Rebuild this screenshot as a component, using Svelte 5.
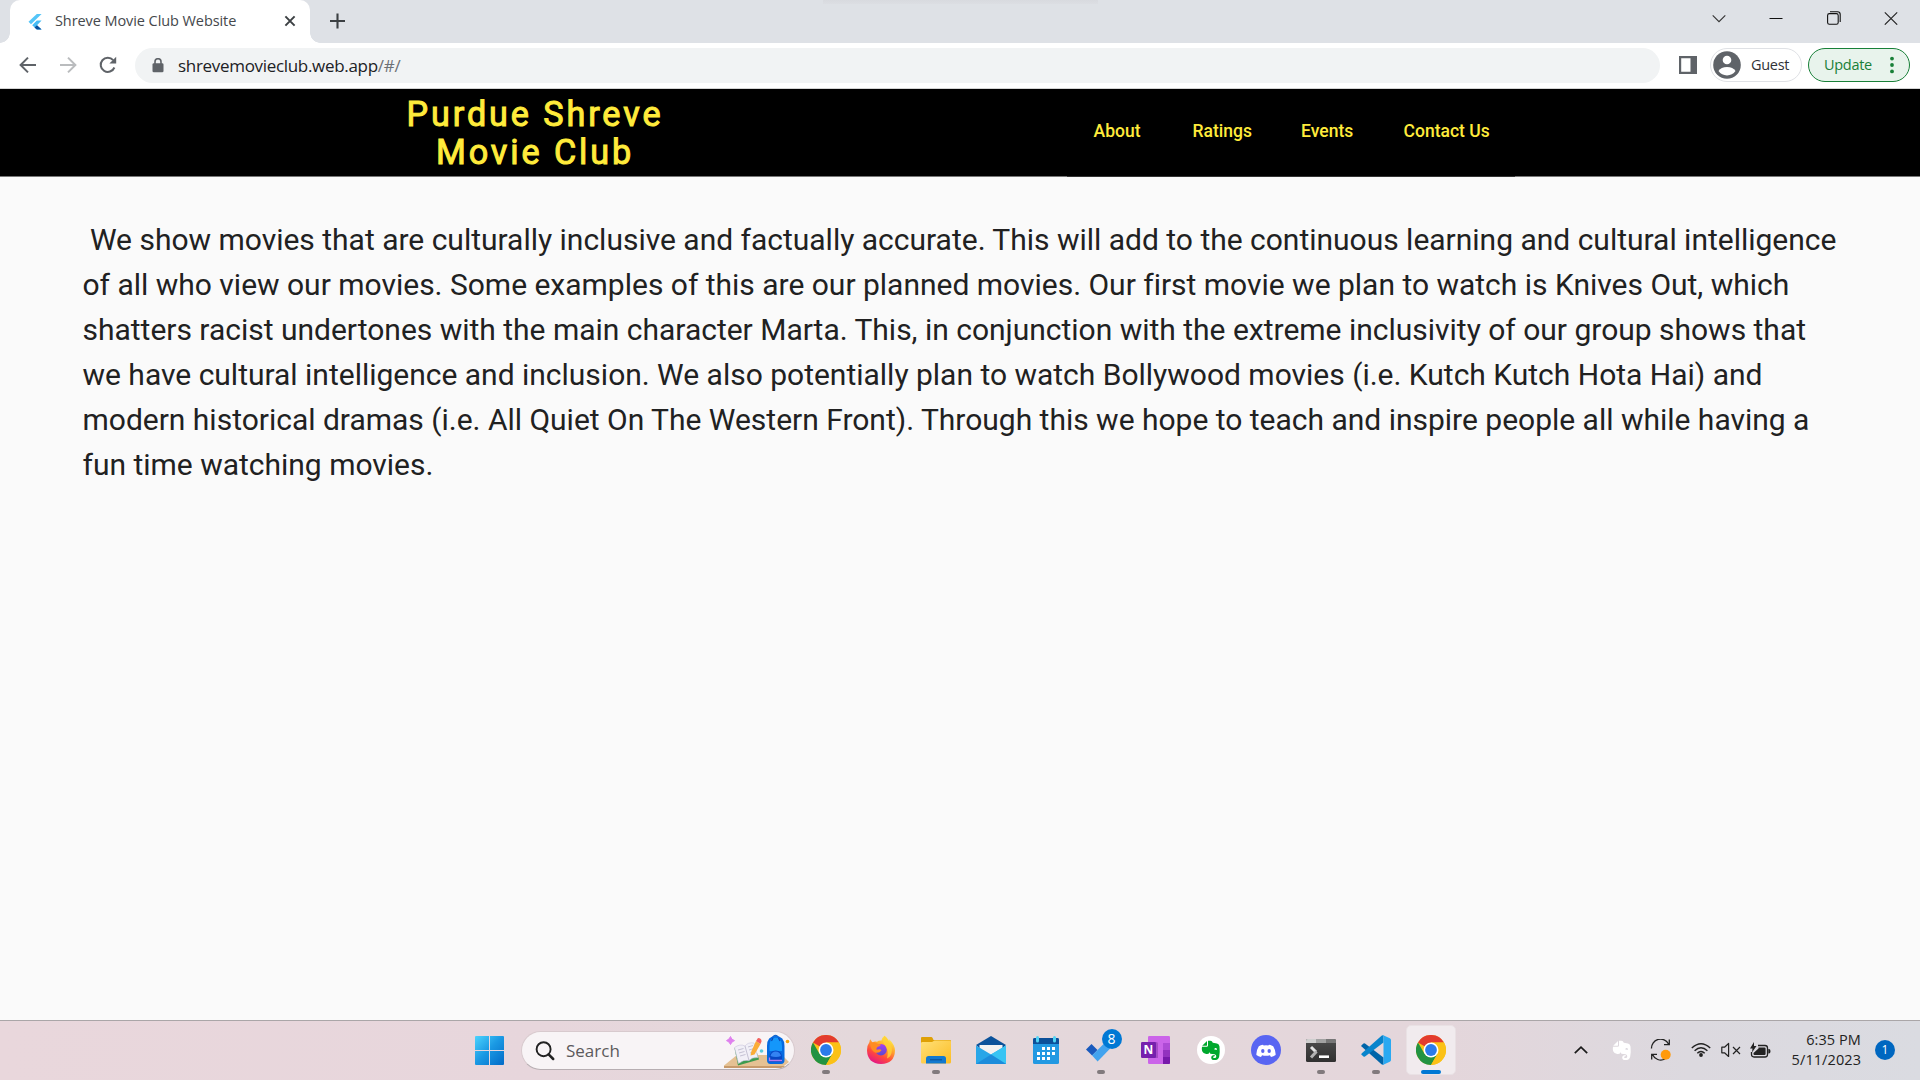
<script>
  const links = [
    { label: 'About', cls: 'about' },
    { label: 'Ratings', cls: 'ratings' },
    { label: 'Events', cls: 'events' },
    { label: 'Contact Us', cls: 'contact' }
  ];
  const lines = [
    ' We show movies that are culturally inclusive and factually accurate. This will add to the continuous learning and cultural intelligence',
    'of all who view our movies. Some examples of this are our planned movies. Our first movie we plan to watch is Knives Out, which',
    'shatters racist undertones with the main character Marta. This, in conjunction with the extreme inclusivity of our group shows that',
    'we have cultural intelligence and inclusion. We also potentially plan to watch Bollywood movies (i.e. Kutch Kutch Hota Hai) and',
    'modern historical dramas (i.e. All Quiet On The Western Front). Through this we hope to teach and inspire people all while having a',
    'fun time watching movies.'
  ];
</script>

{#snippet chrome()}
  <svg width="30" height="30" viewBox="0 0 30 30">
    <circle cx="15" cy="15" r="15" fill="#fbc116" />
    <path d="M15 15L2 7.5A15 15 0 0 1 28 7.5H15Z" fill="#e33b2e" />
    <path d="M2 7.5A15 15 0 0 0 15 30L21.5 18.7L15 15L8.5 18.7Z" fill="#229342" />
    <path d="M15 7.5H28A15 15 0 0 1 15 30L21.5 18.7Z" fill="#fbc116" />
    <circle cx="15" cy="15" r="7.5" fill="#fff" />
    <circle cx="15" cy="15" r="5.9" fill="#2a7bea" />
  </svg>
{/snippet}

{#snippet elephant(color, size)}
  <svg width={size} height={size} viewBox="0 0 20 20">
    <path fill={color} d="M6 1L1.2 5.8H5.1Q6 5.8 6 4.9ZM7 .8V5.4Q7 6.8 5.6 6.8H1Q.5 8.8 1.2 11.2Q2 13.5 5.2 14Q8 14.3 8.4 12.2Q9 14 11.3 14.1Q13.8 14 14.8 15Q15.4 15.8 15.2 17Q15 18 13.8 18H12.6Q11.9 17.5 12.3 16.7Q12.8 16.1 13.7 16.3V14.9Q10.3 14.8 10.2 17.4Q10.4 20 13 20H14.8Q17.4 19.8 18.2 16.5Q19.1 12 18.5 6.4Q18.2 4 16 3.4L11.8 2.7Q11.2 1 9.3.8Z" />
    <path d="M13.2 9.4Q13.7 7.8 15 8.1Q16 8.4 15.9 9.9Q14.6 9.3 13.2 9.4Z" fill={color === '#fff' ? '#dcd9df' : '#fff'} />
  </svg>
{/snippet}

<div class="screen">
  <div class="tabstrip">
    <div class="tab">
      <svg class="favicon" width="16" height="18" viewBox="0 0 16 18">
        <path d="M9.8 1H14.6L4 11.2L1.5 8.8Z" fill="#54c5f8" />
        <path d="M9.8 7.6H14.6L10 12.2L14.6 16.6H9.8L5.2 12.2Z" fill="#45bcf5" />
        <path d="M7.5 14.4L10 12.2L14.6 16.6H9.8Z" fill="#064f9d" />
      </svg>
      <span class="tab-title">Shreve Movie Club Website</span>
      <svg class="tab-close" width="12" height="12" viewBox="0 0 12 12"><path d="M1.4 1.4L10.6 10.6M10.6 1.4L1.4 10.6" stroke="#3c4043" stroke-width="2" /></svg>
    </div>
    <svg class="plus" width="15" height="16" viewBox="0 0 15 16"><path d="M7.5 .5V15.5M0 8H15" stroke="#3c4043" stroke-width="2.1" /></svg>
    <div class="popup-edge"></div>
    <div class="window-buttons">
      <svg width="14" height="14" viewBox="0 0 14 14"><path d="M.7 4.3L7 10.6L13.3 4.3" fill="none" stroke="#333" stroke-width="1.1" /></svg>
      <svg width="14" height="14" viewBox="0 0 14 14"><path d="M.5 7.5H13.5" stroke="#111" /></svg>
      <svg width="14" height="14" viewBox="0 0 14 14"><rect x=".6" y="2.6" width="10.6" height="10.6" rx="1.8" fill="none" stroke="#111" stroke-width="1.1" /><path d="M3 .7H10.5Q13.2.7 13.2 3.4V11" fill="none" stroke="#111" stroke-width="1.1" /></svg>
      <svg width="14" height="14" viewBox="0 0 14 14"><path d="M.8 1.3L13.2 13.7M13.2 1.3L.8 13.7" stroke="#222" stroke-width="1.1" /></svg>
    </div>
  </div>

  <div class="toolbar">
    <svg class="back" width="18" height="18" viewBox="0 0 18 18"><path d="M17 9H2M9 1.6L1.6 9L9 16.4" fill="none" stroke="#5f6368" stroke-width="2" /></svg>
    <svg class="forward" width="18" height="18" viewBox="0 0 18 18"><path d="M1 9H16M9 1.6L16.4 9L9 16.4" fill="none" stroke="#babcbe" stroke-width="2" /></svg>
    <svg class="reload" width="18" height="18" viewBox="0 0 18 18"><path d="M15.4 11.5A7.1 7.1 0 1 1 14.2 4.2" fill="none" stroke="#5f6368" stroke-width="2" /><path d="M17.2.8V7.6H10.4Z" fill="#5f6368" /></svg>
    <div class="omnibox">
      <svg class="lock" width="12" height="15" viewBox="0 0 12 15"><path d="M3 6V3.7A3 3 0 0 1 9 3.7V6" fill="none" stroke="#5f6368" stroke-width="1.6" /><rect x=".5" y="5.2" width="11" height="9" rx="1.3" fill="#5f6368" /></svg>
      <span class="url">shrevemovieclub.web.app<span>/#/</span></span>
    </div>
    <svg class="panel" width="18" height="18" viewBox="0 0 18 18"><path d="M0 0H18V18H0ZM2.2 2.2V15.8H11.5V2.2Z" fill="#5f6368" fill-rule="evenodd" /></svg>
    <div class="guest">
      <svg width="28" height="28" viewBox="0 0 28 28"><circle cx="14" cy="14" r="13.8" fill="#5f6368" /><circle cx="14" cy="9" r="4.3" fill="#fff" /><path d="M5.5 20Q8 16 14 16T22.5 20Q19.4 24.4 14 24.4T5.5 20Z" fill="#fff" /></svg>
      <span>Guest</span>
    </div>
    <div class="update">
      <span>Update</span>
      <svg width="4" height="18" viewBox="0 0 4 18"><circle cx="2" cy="2.6" r="1.9" fill="#188038" /><circle cx="2" cy="9" r="1.9" fill="#188038" /><circle cx="2" cy="15.4" r="1.9" fill="#188038" /></svg>
    </div>
  </div>

  <header>
    <h1>Purdue Shreve<br />Movie Club</h1>
    <nav>
      {#each links as link}
        <a class={link.cls} href="#/">{link.label}</a>
      {/each}
    </nav>
  </header>

  <main>
    <p>
      {#each lines as line}
        <span>{line}</span>
      {/each}
    </p>
  </main>

  <footer>
    <div class="slot start">
      <svg width="30" height="30" viewBox="0 0 30 30">
        <defs><linearGradient id="win" x1="0" y1="0" x2="30" y2="30" gradientUnits="userSpaceOnUse"><stop offset="0" stop-color="#4cd3fd" /><stop offset=".45" stop-color="#1b9ae4" /><stop offset="1" stop-color="#0067c5" /></linearGradient></defs>
        <path fill="url(#win)" d="M1 0H14V14H0V1Q0 0 1 0ZM15 0H28Q29 0 29 1V14H15ZM0 15H14V29H1Q0 29 0 28ZM15 15H29V28Q29 29 28 29H15Z" />
      </svg>
    </div>
    <div class="search">
      <svg class="lens" width="20" height="20" viewBox="0 0 20 20"><circle cx="8.6" cy="8.2" r="7" fill="none" stroke="#222" stroke-width="1.9" /><path d="M13.6 13.4L18.2 18" stroke="#222" stroke-width="2.5" stroke-linecap="round" /></svg>
      <span>Search</span>
      <svg class="art" width="68" height="36" viewBox="0 0 68 36">
        <path d="M0 31.500L13 21H58L65 28L60 32H0Z" fill="#e5c193" />
        <path d="M0 32H62L58 34H0Z" fill="#c89a6b" />
        <path d="M10.500 14L14 31.500L35 25.500L33 19Z" fill="#3d9b4e" />
        <path d="M10.500 13.500Q16 9.500 21 12Q24 8 30 9L34 23.500Q28 23 25 26.500Q20 25 14.500 29.500Z" fill="#f1eff7" stroke="#c9c5dc" stroke-width=".6" />
        <path d="M21 12L25 26.500M14 16L19.500 14.500M15 19L20.500 17.500M16 22L21.500 20.500M24 13L29 11.500M25 16L30 14.500M26 19L31 17.500" stroke="#b9b5ca" stroke-width=".8" />
        <path d="M27.500 17L26.500 21.500L30.500 20.500L36.500 10L32 7Z" fill="#fbac38" />
        <path d="M32 7L34 4Q37.800 4.300 37.500 7.500L36.500 10Z" fill="#f3625f" />
        <path d="M6.500 2.5Q7 5.500 10.500 6.600Q7.500 7.500 6.500 10.500Q5.500 7.500 2.500 6.600Q5.500 5.500 6.500 2.500Z" fill="#df80ee" stroke="#df80ee" />
        <circle cx="37.500" cy="17" r="1.800" fill="#59cadb" /><circle cx="63.500" cy="7.500" r="1.800" fill="#f4a30c" />
        <path d="M47.500 5Q51.500-2 55.500 5" fill="none" stroke="#1768cc" stroke-width="1.500" />
        <path d="M43 12Q43 2 51.700 2T60.500 12V26Q60.500 30 57 30H46.500Q43 30 43 26Z" fill="#0669e0" />
        <path d="M45.500 12Q45.500 3.500 51.700 3.500T58 12V17H45.500Z" fill="#1497fb" />
        <path d="M47.500 7L49 4M56 7L54.500 4" stroke="#0b4bb5" stroke-width="1.200" />
        <path d="M45.500 24Q45.500 16.500 51.700 16.500T58 24V28H45.500Z" fill="#0747c4" /><path d="M46.500 22Q47.500 17.500 51.700 17.500T57 22Q52 24 46.500 22Z" fill="#3483f2" /><path d="M45.500 23.500V26.500H58" fill="none" stroke="#b47cf0" stroke-width="1.300" />
      </svg>
    </div>
    <div class="apps">
      <div class="slot running">{@render chrome()}</div>
      <div class="slot">
        <svg width="30" height="30" viewBox="0 0 30 30">
          <defs>
            <linearGradient id="fox" x1="22" y1="2" x2="8" y2="28" gradientUnits="userSpaceOnUse"><stop offset="0" stop-color="#fff44f" /><stop offset=".35" stop-color="#ffa72b" /><stop offset=".68" stop-color="#ff4a3c" /><stop offset="1" stop-color="#e31587" /></linearGradient>
            <linearGradient id="globe" x1="0" y1="0" x2="0" y2="1"><stop offset="0" stop-color="#a63df5" /><stop offset="1" stop-color="#5a4bcf" /></linearGradient>
          </defs>
          <path d="M18.500.8Q21.200 2.600 22.500 6Q23 5 22.800 4Q28.800 9.500 29 15.500Q28.500 28.800 15 29Q1.500 28.500 1 15.500Q1 10.200 3.500 7Q3.400 5.700 4.200 4.300L6.500 7.400Q8.700 6.200 11 6.800Q13 5.200 15.500 5.600Q15.800 2.700 18.500.8Z" fill="url(#fox)" />
          <circle cx="15" cy="14.700" r="5.800" fill="url(#globe)" />
          <path d="M4 8Q7 6.200 10.500 8.200Q12.300 9.600 15 9.500Q14.500 11.500 11.800 11.800Q10 13 10.500 14.800Q14.500 13.500 15.500 15.200Q13 18.800 8.800 17.500Q4.500 15 4 8Z" fill="#ff8b22" />
          <path d="M18.500.8Q21.200 2.600 23.500 7Q27 12 25.500 18Q24.500 22 21 23.500Q23 16 19.500 11Q14.800 6 18.500.8Z" fill="#ffd036" opacity=".85" />
        </svg>
      </div>
      <div class="slot running">
        <svg width="30" height="28" viewBox="0 0 30 28">
          <defs><linearGradient id="folder" x1="0" y1="0" x2="1" y2="1"><stop offset="0" stop-color="#ffe078" /><stop offset="1" stop-color="#fcbd24" /></linearGradient></defs>
          <path d="M0 2Q0 1 1 1H10.500Q11.500 1 12.500 4H29Q30 4 30 5V10H0Z" fill="#dfa006" />
          <path d="M0 7.200Q0 6 1.500 6H11L13.500 4.600H29Q30 4.600 30 6V26Q30 27.500 28.500 27.500H1.500Q0 27.500 0 26Z" fill="url(#folder)" />
          <path d="M5 27.500V22.500Q5 20 7.500 20H22.500Q25 20 25 22.500V27.500Z" fill="#1279cf" /><path d="M9 23.800H21" stroke="#0b4c90" />
        </svg>
      </div>
      <div class="slot">
        <svg width="30" height="28" viewBox="0 0 30 28"><path d="M0 9L15 0L30 9L15 22Z" fill="#0a529b" /><path d="M3.500 9H26.500V13L15 20L3.500 13Z" fill="#f2f2f2" /><path d="M0 9.500L15 18.500L30 9.500V28H0Z" fill="#28a6e8" /><path d="M15 18.500L30 9.500V28Z" fill="#38c4f3" /><path d="M0 28L15 18.500L30 28Z" fill="#1c8cdb" /></svg>
      </div>
      <div class="slot">
        <svg width="26" height="28" viewBox="0 0 26 28"><rect y="2" width="26" height="26" rx="1.500" fill="#2299e2" /><path d="M0 3.500Q0 2 1.500 2H24.500Q26 2 26 3.500V8H0Z" fill="#0b5099" /><rect x="3" width="3" height="6.500" rx="1.500" fill="#50d4f5" /><rect x="20" width="3" height="6.500" rx="1.500" fill="#50d4f5" /><path d="M9 11h3v3h-3zM14 11h3v3h-3zM19 11h3v3h-3zM4 16h3v3h-3zM9 16h3v3h-3zM14 16h3v3h-3zM19 16h3v3h-3zM4 21h3v3h-3zM9 21h3v3h-3zM14 21h3v3h-3z" fill="#fff" /></svg>
      </div>
      <div class="slot running">
        <svg class="todo" width="30" height="30" viewBox="0 0 30 30"><path d="M0 14.500L5.500 9L11.500 14.900L6.100 20.500Z" fill="#195abd" /><path d="M6.100 20.500L23.500 3L29 8.500L11.600 26.500Z" fill="#42a3ee" /></svg>
        <b class="todo-badge">8</b>
      </div>
      <div class="slot">
        <svg width="30" height="28" viewBox="0 0 30 28"><rect x="7" width="22" height="28" rx="1.200" fill="#cb64e9" /><path d="M22 7H29V14H22Z" fill="#ae4bd5" /><path d="M22 14H29V21H22Z" fill="#9332bf" /><path d="M22 21H29V27Q29 28 28 28H22Z" fill="#7719aa" /><path d="M8 6H15.500Q17 6 17 8V22H8Z" fill="#8e3ab2" opacity=".6" /><rect y="6" width="15" height="16" rx="1.200" fill="#7620ad" /><text x="7.500" y="18.200" text-anchor="middle" class="note">N</text></svg>
      </div>
      <div class="slot"><div class="evernote">{@render elephant('#00a82d', 20)}</div></div>
      <div class="slot">
        <svg width="30" height="30" viewBox="0 0 30 30"><circle cx="15" cy="15" r="15" fill="#5865f2" /><path d="M12.700 10.500Q15 10.200 17.300 10.500L18 9.800Q20.300 10.200 22.200 11.200Q24.900 15.500 24.600 20Q22.500 21.600 20 22L18.900 20.200Q15 21.200 11.100 20.200L10 22Q7.500 21.600 5.400 20Q5.100 15.500 7.800 11.200Q9.700 10.200 12 9.800Z" fill="#fff" /><ellipse cx="11.800" cy="16" rx="1.700" ry="1.900" fill="#5865f2" /><ellipse cx="18.200" cy="16" rx="1.700" ry="1.900" fill="#5865f2" /></svg>
      </div>
      <div class="slot running">
        <svg width="30" height="23" viewBox="0 0 30 23"><defs><linearGradient id="term" x1="0" y1="0" x2="0" y2="1"><stop offset="0" stop-color="#4d4d4d" /><stop offset="1" stop-color="#303030" /></linearGradient></defs><rect width="30" height="23" rx="1.500" fill="url(#term)" /><path d="M0 4V1.500Q0 0 1.500 0H10V4Z" fill="#cfcfcf" /><path d="M10 0H20V4H10Z" fill="#a2a2a2" /><path d="M20 0H28.500Q30 0 30 1.500V4H20Z" fill="#777" /><path d="M5 8L10 13" stroke="#e4e4e4" stroke-width="3" /><path d="M10.500 12.500L5 18.500" stroke="#b2b2b2" stroke-width="3" /><path d="M13 17.700H23" stroke="#fff" stroke-width="2.600" /></svg>
      </div>
      <div class="slot running">
        <svg width="30" height="30" viewBox="0 0 30 30"><path d="M.5 10.300L2.500 8.500Q3.200 8 4 8.600L22.500 22.500V29.500Q21.500 30 20.500 29.200L.6 11.600Q0 11 .5 10.300Z" fill="#0065a9" /><path d="M.5 19.700L2.500 21.500Q3.200 22 4 21.400L22.500 7.500V.5Q21.500 0 20.500.8L.6 18.400Q0 19 .5 19.700Z" fill="#0784cc" /><path d="M20.500.8Q21.500-.2 22.800.4L28.800 3.200Q30 3.800 30 5V25Q30 26.200 28.800 26.800L22.800 29.600Q21.500 30.200 20.500 29.200Q22.500 30 22.500 28V2Q22.500 0 20.500.8Z" fill="#29a9f2" /></svg>
      </div>
      <div class="slot active">{@render chrome()}</div>
    </div>
    <div class="tray">
      <svg class="up" width="14" height="8" viewBox="0 0 14 8"><path d="M.8 7.200L7 1.200L13.200 7.200" fill="none" stroke="#1a1a1a" stroke-width="1.700" /></svg>
      <div class="tray-ever">{@render elephant('#fff', 20)}</div>
      <svg class="sync" width="22" height="22" viewBox="0 0 22 22"><path d="M1.500 9.500A9 9 0 0 1 18.500 5M19.300.5V5.700H14M15 20A9 9 0 0 1 2.500 15.500M1.700 20.500V15.300H7" fill="none" stroke="#222" stroke-width="1.300" /><circle cx="15.700" cy="15.700" r="5" fill="#ff9a0b" /></svg>
      <svg class="wifi" width="20" height="16" viewBox="0 0 20 16"><path d="M.8 6Q10-2.600 19.200 6M3.600 8.700Q10 2.600 16.400 8.700M6.300 11.300Q10 7.600 13.700 11.300" fill="none" stroke="#222" stroke-width="1.400" /><circle cx="10" cy="13" r="1.900" fill="#222" /></svg>
      <svg class="speaker" width="20" height="16" viewBox="0 0 20 16"><path d="M.8 5.200H3.500L7.600 1.500V14.500L3.500 10.800H.8Z" fill="none" stroke="#222" stroke-width="1.200" stroke-linejoin="round" /><path d="M12 5L19 12M19 5L12 12" stroke="#222" stroke-width="1.200" /></svg>
      <svg class="battery" width="21" height="17" viewBox="0 0 21 17"><path d="M8 3.500H15Q17.500 3.500 17.500 6V12.500Q17.500 15 15 15H4Q1.500 15 1.500 12.500V10" fill="none" stroke="#222" stroke-width="1.300" /><path d="M8.500 5.500H14.500Q15.600 5.500 15.600 6.600V12Q15.600 13.100 14.500 13.100H4.500Q3.500 13.100 3.500 12V11L8.500 6.500ZM18.300 7H19.200Q20.500 7.200 20.500 9.200T19.200 11.500H18.300ZM4 0L0 6.500H2.500L2 10.500L6.500 4H4Z" fill="#222" /></svg>
      <div class="clock"><span>6:35 PM</span><span>5/11/2023</span></div>
      <b class="count">1</b>
    </div>
  </footer>
</div>

<style>
  :global(body) { margin: 0; overflow: hidden; }
  * { box-sizing: border-box; }
  svg { display: block; flex: none; }
  .screen { width: 1920px; height: 1080px; display: flex; flex-direction: column; background: #fafafa; font-family: 'Open Sans', 'Noto Sans', sans-serif; white-space: nowrap; overflow: hidden; }

  .tabstrip { height: 43px; flex: none; background: #dee1e6; display: flex; position: relative; padding-left: 10px; }
  .tab { width: 300px; height: 43px; background: #fff; border-radius: 10px 10px 0 0; display: flex; align-items: center; position: relative; padding-left: 17px; }
  .tab::before, .tab::after { content: ''; position: absolute; bottom: 0; width: 10px; height: 10px; }
  .tab::before { left: -10px; background: radial-gradient(circle at 0 0, #dee1e6 9.500px, #fff 10px); }
  .tab::after { right: -10px; background: radial-gradient(circle at 100% 0, #dee1e6 9.500px, #fff 10px); }
  .tab-title { margin-left: 12px; width: 229px; font-size: 14.500px; line-height: 20px; letter-spacing: -0.080px; color: #45484c; margin-top: -2px; }
  .tab-close { margin-top: -1px; }
  .plus { margin: 13px 0 0 20px; }
  .popup-edge { position: absolute; left: 823px; top: 0; width: 275px; height: 4px; background: linear-gradient(#d8dadf, #dcdee3); }
  .window-buttons { margin: 11px 22px 0 auto; display: flex; gap: 43.300px; }

  .toolbar { height: 46px; flex: none; background: #fff; border-bottom: 1px solid #d4d4d4; display: flex; align-items: center; padding: 0 10px 1px 19px; }
  .forward { margin-left: 22px; }
  .reload { margin-left: 22px; }
  .omnibox { width: 1525px; height: 35px; margin-left: 18px; border-radius: 18px; background: #f1f3f4; display: flex; align-items: center; padding-left: 17px; }
  .url { margin: 1px 0 0 14px; font-size: 17px; line-height: 24px; color: #202124; letter-spacing: -0.310px; }
  .url span { color: #6c7075; }
  .panel { margin-left: 19px; }
  .guest { width: 92px; height: 34px; margin-left: 13px; border: 1px solid #dfe1e5; border-radius: 17px; display: flex; align-items: center; padding-left: 2px; font-size: 14.500px; letter-spacing: -0.300px; color: #303236; }
  .guest span { margin-left: 10px; margin-top: -1px; }
  .update { width: 102px; height: 34px; margin-left: 6px; border: 1px solid #188038; border-radius: 17px; background: #e8f3ec; display: flex; align-items: center; justify-content: space-between; padding: 0 15px; font-size: 14.500px; letter-spacing: -0.300px; color: #188038; }
  .update span { margin-top: -1px; }

  header { height: 88px; flex: none; background: #000; border-bottom: 1px solid #777; display: flex; font-family: Roboto, sans-serif; color: #ffeb3b; }
  h1 { margin: 6px 0 0 385px; width: 300px; text-align: center; font-size: 34.200px; line-height: 38px; font-weight: 400; letter-spacing: 2.900px; -webkit-text-stroke: 1px #ffeb3b; }
  nav { height: 88px; margin-left: 382px; width: 448px; background: #000; border-bottom: 1px solid #333; display: flex; align-items: flex-start; padding: 30px 0 0 26.600px; }
  nav a { font-size: 17.500px; line-height: 24px; font-weight: 500; color: #ffeb3b; text-decoration: none; }
  .about { width: 99px; }
  .ratings { width: 108.500px; }
  .events { width: 102.500px; }

  main { flex: 1; padding: 40px 82.500px; }
  p { margin: 0; font-family: Roboto, sans-serif; font-size: 30px; line-height: 45px; letter-spacing: -0.009px; color: #212121; white-space: pre; display: flex; flex-direction: column; align-items: flex-start; }

  footer { height: 60px; flex: none; border-top: 1px solid #aaa6a8; background: linear-gradient(90deg, #e9d7dc 0%, #e7d6dc 28%, #e4d8db 45%, #e4d6db 75%, #dcd9df 88%, #dadbe1 100%); display: flex; }
  .slot { width: 55px; height: 59px; flex: none; display: flex; align-items: center; justify-content: center; position: relative; }
  .start { margin-left: 462.500px; }
  .search { width: 274px; height: 39px; margin: 10px 0 0 3.500px; border-radius: 20px; background: #f8f4f6; border: 1px solid #d8cace; border-bottom-color: #b7aeb2; display: flex; overflow: hidden; color: #5c5a5c; font-size: 17px; }
  .lens { margin: 9px 0 0 13px; }
  .search span { flex: none; margin: 0 0 0 11px; width: 158px; line-height: 37px; }
  .art { margin-top: 2px; }
  .apps { display: flex; margin-left: 3.500px; }
  .apps > .slot { padding-bottom: 1px; }
  .running::after { content: ''; position: absolute; bottom: 6px; width: 8px; height: 4px; border-radius: 2px; background: #817a7d; }
  .active::before { content: ''; position: absolute; width: 48px; height: 48px; border-radius: 5px; background: #f1ebee; border: 1px solid #e9e1e4; }
  .active :global(svg) { position: relative; }
  .active::after { content: ''; position: absolute; bottom: 6px; width: 20px; height: 4px; border-radius: 2px; background: #0078d4; }
  .todo-badge { position: absolute; left: 28px; top: 8px; width: 20px; height: 20px; border-radius: 50%; background: #0078d4; color: #fff; font-size: 14px; font-weight: 400; line-height: 20px; text-align: center; }
  .note { font: 700 12px 'Open Sans', sans-serif; fill: #fff; }
  .evernote { width: 28px; height: 28px; border-radius: 50%; background: #fff; display: flex; align-items: center; justify-content: center; }
  .tray { margin-left: auto; padding: 0 25px 1px 0; display: flex; align-items: center; }
  .tray-ever { margin-left: 24px; }
  .sync { margin-left: 18px; }
  .wifi { margin-left: 19px; }
  .speaker { margin-left: 10px; }
  .battery { margin-left: 9px; }
  .clock { width: 90px; margin-top: -1px; display: flex; flex-direction: column; align-items: flex-end; font-size: 14.500px; line-height: 20px; color: #222; letter-spacing: 0.080px; }
  .count { width: 20px; height: 20px; margin-left: 14px; border-radius: 50%; background: #0067c0; color: #fff; font-size: 12px; font-weight: 400; line-height: 20px; text-align: center; }
</style>
